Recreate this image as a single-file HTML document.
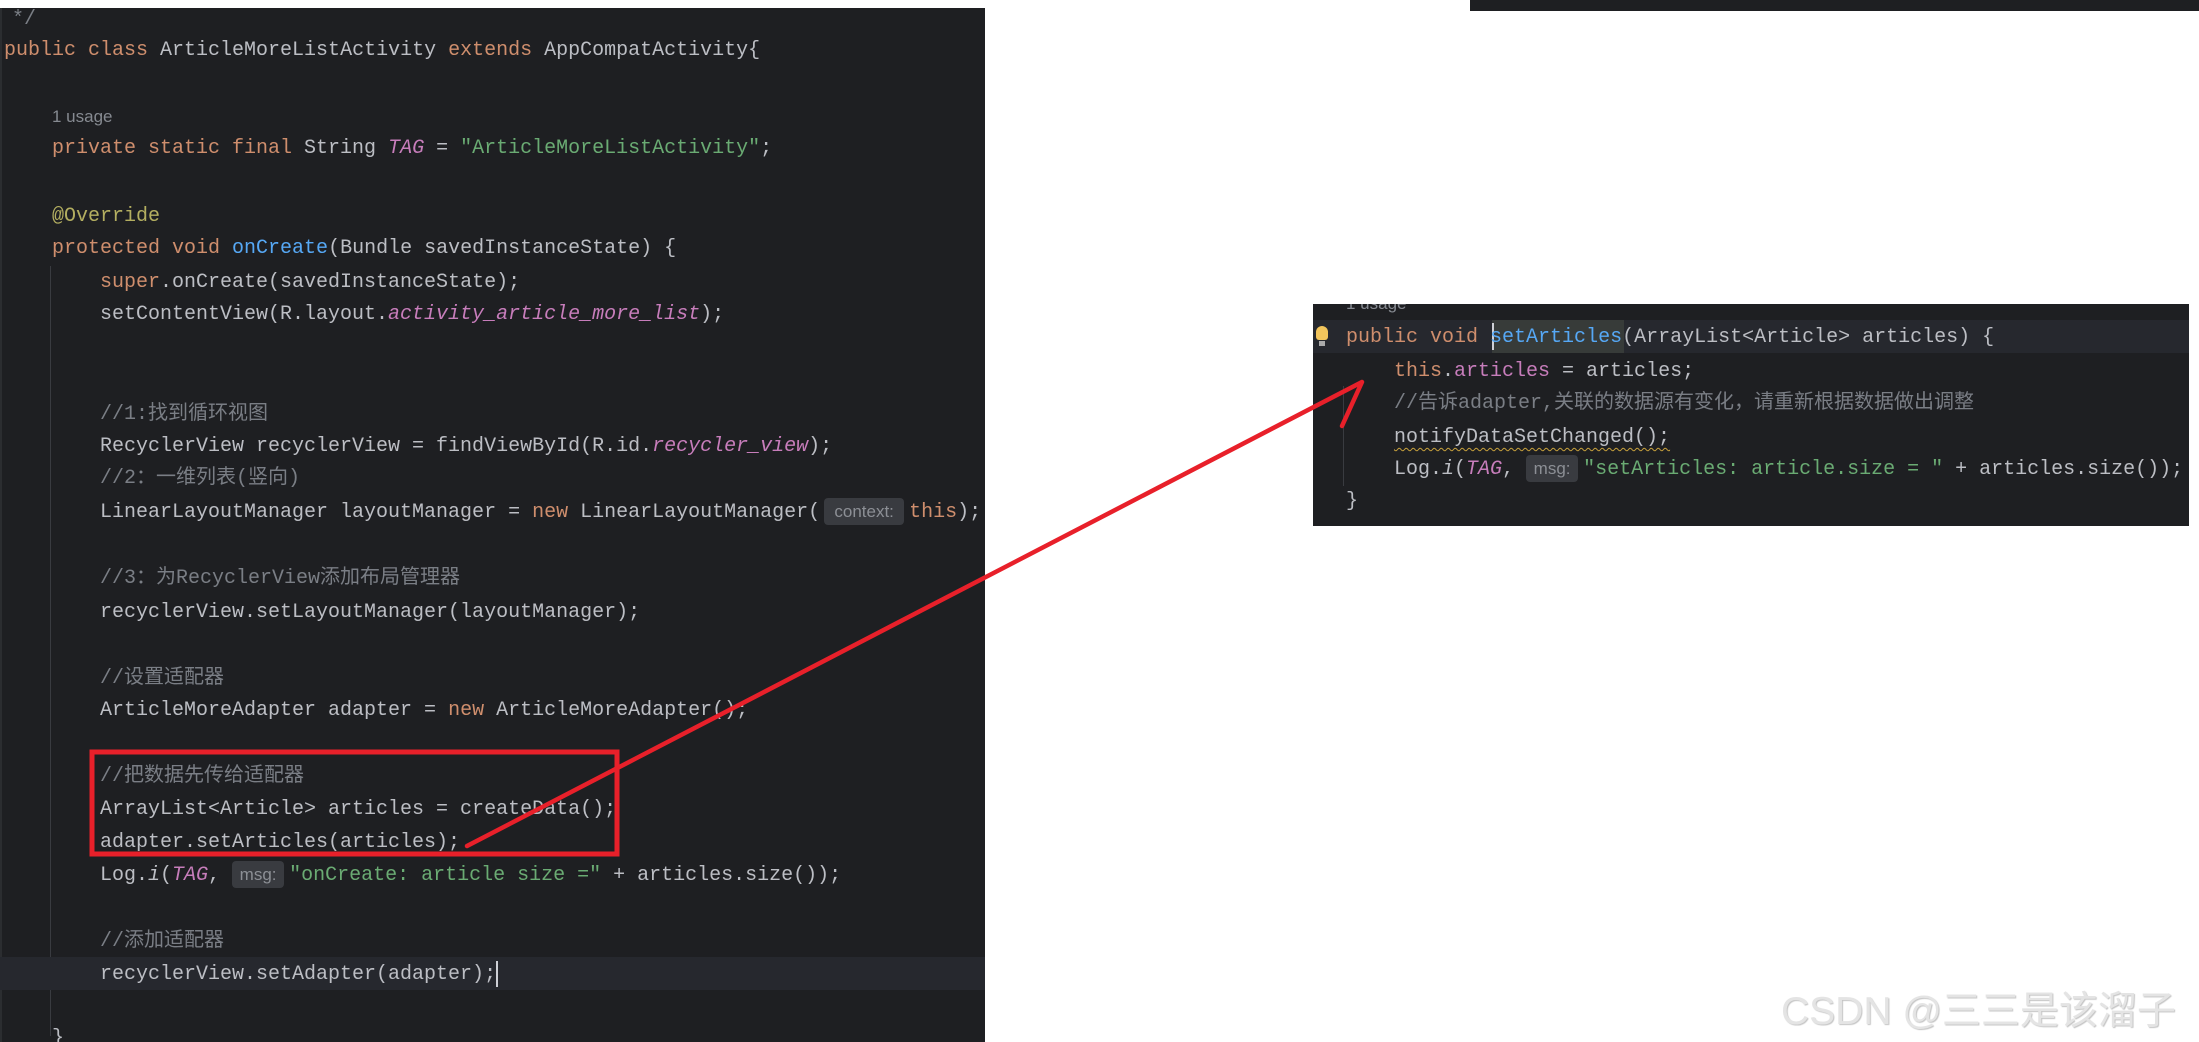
<!DOCTYPE html>
<html><head><meta charset="utf-8"><style>
body{margin:0;width:2199px;height:1042px;background:#fff;position:relative;overflow:hidden;font-family:"Liberation Mono","Noto Sans CJK SC",monospace;}
.p{position:absolute;background:#1e1f22;overflow:hidden;}
.l{position:absolute;white-space:pre;font-size:20px;line-height:33px;height:33px;color:#bcbec4;}
.k{color:#cf8e6d}.s{color:#6aab73}.c{color:#7a7e85}.f{color:#56a8f5}.v{color:#c77dbb;font-style:italic}.fi{color:#c77dbb}.a{color:#b3ae60}
.h{display:inline-block;font-family:"Liberation Sans",sans-serif;font-size:17px;color:#8c8f95;background:#393b40;border-radius:4px;height:27px;line-height:27px;text-align:center;vertical-align:middle;margin:0 5px 0 0;}
.u{font-family:"Liberation Sans",sans-serif;font-size:17px;color:#868a91}
.sh{position:absolute;left:0;top:3px;width:985px;height:1034px}
</style></head><body>
<div class="p" style="left:1470px;top:0;width:729px;height:11px"></div>
<div class="p" style="left:0;top:8px;width:985px;height:1034px">
<div style="position:absolute;left:0;top:0;width:2px;height:1034px;background:#2b2d30"></div>
<div style="position:absolute;left:50px;top:258px;width:1px;height:770px;background:#393b40"></div>
<div style="position:absolute;left:0;top:949px;width:985px;height:33px;background:#26282e"></div>
<div class="sh">
<div class="l c" style="left:12px;top:-8px">*/</div>
<div class="l" style="left:4px;top:23px"><span class="k">public class</span> ArticleMoreListActivity <span class="k">extends</span> AppCompatActivity{</div>
<div class="l u" style="left:52px;top:89px">1 usage</div>
<div class="l" style="left:52px;top:121px"><span class="k">private static final</span> String <span class="v">TAG</span> = <span class="s">"ArticleMoreListActivity"</span>;</div>
<div class="l a" style="left:52px;top:189px">@Override</div>
<div class="l" style="left:52px;top:221px"><span class="k">protected void</span> <span class="f">onCreate</span>(Bundle savedInstanceState) {</div>
<div class="l" style="left:100px;top:255px"><span class="k">super</span>.onCreate(savedInstanceState);</div>
<div class="l" style="left:100px;top:287px">setContentView(R.layout.<span class="v">activity_article_more_list</span>);</div>
<div class="l c" style="left:100px;top:387px">//1:找到循环视图</div>
<div class="l" style="left:100px;top:419px">RecyclerView recyclerView = findViewById(R.id.<span class="v">recycler_view</span>);</div>
<div class="l c" style="left:100px;top:451px">//2：一维列表(竖向)</div>
<div class="l" style="left:100px;top:485px">LinearLayoutManager layoutManager = <span class="k">new</span> LinearLayoutManager(<span class="h" style="width:80px;margin-left:4px">context:</span><span class="k">this</span>);</div>
<div class="l c" style="left:100px;top:551px">//3：为RecyclerView添加布局管理器</div>
<div class="l" style="left:100px;top:585px">recyclerView.setLayoutManager(layoutManager);</div>
<div class="l c" style="left:100px;top:651px">//设置适配器</div>
<div class="l" style="left:100px;top:683px">ArticleMoreAdapter adapter = <span class="k">new</span> ArticleMoreAdapter();</div>
<div class="l c" style="left:100px;top:749px">//把数据先传给适配器</div>
<div class="l" style="left:100px;top:782px">ArrayList&lt;Article&gt; articles = createData();</div>
<div class="l" style="left:100px;top:815px">adapter.setArticles(articles);</div>
<div class="l" style="left:100px;top:848px">Log.<span style="font-style:italic">i</span>(<span class="v">TAG</span>, <span class="h" style="width:52px">msg:</span><span class="s">"onCreate: article size ="</span> + articles.size());</div>
<div class="l c" style="left:100px;top:914px">//添加适配器</div>
<div class="l" style="left:100px;top:947px">recyclerView.setAdapter(adapter);<span style="display:inline-block;width:2px;height:26px;background:#ced0d6;vertical-align:middle"></span></div>
<div class="l" style="left:52px;top:1011px">}</div>
</div>
</div>
<div class="p" style="left:1313px;top:304px;width:876px;height:222px">
<div style="position:absolute;left:0;top:16px;width:876px;height:33px;background:#26282e"></div>
<div style="position:absolute;left:179px;top:16px;width:132px;height:33px;background:#373b39"></div>
<div style="position:absolute;left:179px;top:19px;width:2px;height:27px;background:#ced0d6"></div>
<div style="position:absolute;left:30px;top:82px;width:1px;height:100px;background:#393b40"></div>
<div class="l u" style="left:33px;top:-17px">1 usage</div>
<div style="position:absolute;left:3px;top:22px;width:12px;height:14px;background:#f2c55c;border-radius:6px 6px 3px 3px"></div>
<div style="position:absolute;left:6px;top:37px;width:6px;height:5px;background:#aaa"></div>
<div class="l" style="left:33px;top:17px"><span class="k">public void</span> <span class="f">setArticles</span>(ArrayList&lt;Article&gt; articles) {</div>
<div class="l" style="left:81px;top:51px"><span class="k">this</span>.<span class="fi">articles</span> = articles;</div>
<div class="l c" style="left:81px;top:83px">//告诉adapter,关联的数据源有变化，请重新根据数据做出调整</div>
<div class="l" style="left:81px;top:117px;text-decoration:underline wavy #c9a23c;text-underline-offset:5px;text-decoration-thickness:1px">notifyDataSetChanged();</div>
<div class="l" style="left:81px;top:149px">Log.<span style="font-style:italic">i</span>(<span class="v">TAG</span>, <span class="h" style="width:52px">msg:</span><span class="s">"setArticles: article.size = "</span> + articles.size());</div>
<div class="l" style="left:33px;top:181px">}</div>
</div>
<svg style="position:absolute;left:0;top:0" width="2199" height="1042">
<rect x="92" y="752" width="525" height="102" fill="none" stroke="#e8202a" stroke-width="5"/>
<path d="M467 846 L1362 382 M1362 382 L1342 426" stroke="#e8202a" stroke-width="4.5" fill="none" stroke-linecap="round"/>
</svg>
<div style="position:absolute;left:1781px;top:980px;font-family:'Liberation Sans','Noto Sans CJK SC',sans-serif;font-size:39px;color:#e4e4e4;text-shadow:1px 1px 1px #c4c4c4;white-space:nowrap">CSDN @三三是该溜子</div>
</body></html>
